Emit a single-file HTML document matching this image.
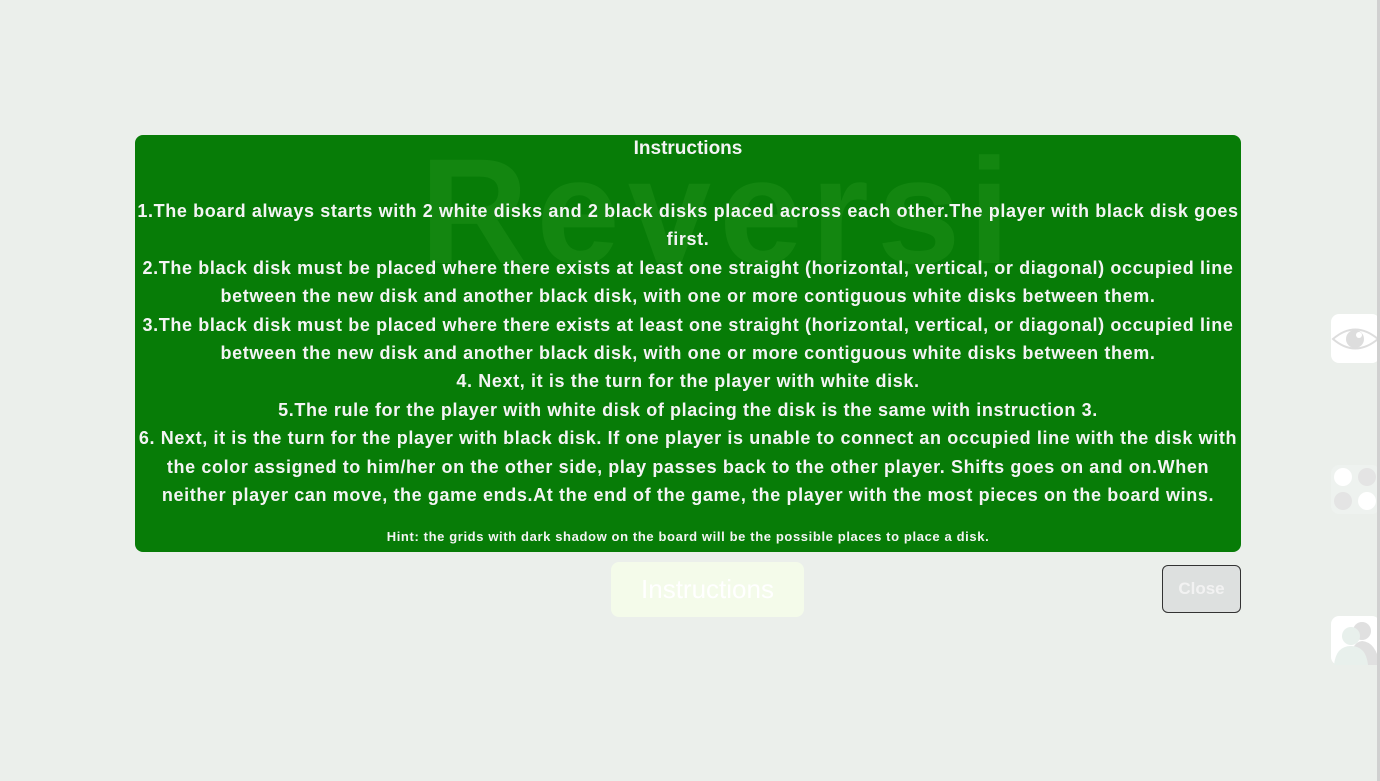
<!DOCTYPE html>
<html><head><style>
html,body{margin:0;padding:0;width:1380px;height:781px;overflow:hidden;background:#ebefeb;font-family:"Liberation Sans",sans-serif}
.sb{position:absolute;right:0;top:0;width:3px;height:781px;background:#d0d0d0}
.box{position:absolute;left:135px;top:135px;width:1106px;height:417px;background:#077c07;border-radius:8px;color:#f4f4f4;font-weight:bold;text-align:center;overflow:hidden}
.logo{position:absolute;left:285px;top:-10px;font-size:150px;color:#138610;letter-spacing:8px;font-weight:bold}
.t{position:absolute;left:0;width:100%;font-size:18px;white-space:nowrap;letter-spacing:0.62px}
.play{position:absolute;left:611px;top:485px;width:193px;height:52px;border-radius:8px;background:#078007;color:#1f8f1f;font-size:26px;text-align:center;line-height:52px}
.ins{position:absolute;left:611px;top:562px;width:193px;height:55px;border-radius:8px;background:#f4fbea;color:#fff;font-size:26px;text-align:center;line-height:55px}
.close{position:absolute;left:1162px;top:565px;width:77px;height:46px;border:1px solid #333;border-radius:6px;background:#dde0df;color:#f2f2f2;font-weight:bold;font-size:17px;text-align:center;line-height:46px}
.ic{position:absolute;left:1331px;width:49px;height:49px;border-radius:8px}
</style></head><body>
<div class="play">Play</div>
<div class="box">
<div class="logo">Reversi</div>
<div class="t" style="top:3px;font-size:19px;letter-spacing:0">Instructions</div>
<div class="t" style="top:66px">1.The board always starts with 2 white disks and 2 black disks placed across each other.The player with black disk goes</div>
<div class="t" style="top:94px">first.</div>
<div class="t" style="top:123px">2.The black disk must be placed where there exists at least one straight (horizontal, vertical, or diagonal) occupied line</div>
<div class="t" style="top:151px">between the new disk and another black disk, with one or more contiguous white disks between them.</div>
<div class="t" style="top:180px">3.The black disk must be placed where there exists at least one straight (horizontal, vertical, or diagonal) occupied line</div>
<div class="t" style="top:208px">between the new disk and another black disk, with one or more contiguous white disks between them.</div>
<div class="t" style="top:236px">4. Next, it is the turn for the player with white disk.</div>
<div class="t" style="top:265px">5.The rule for the player with white disk of placing the disk is the same with instruction 3.</div>
<div class="t" style="top:293px">6. Next, it is the turn for the player with black disk. If one player is unable to connect an occupied line with the disk with</div>
<div class="t" style="top:322px">the color assigned to him/her on the other side, play passes back to the other player. Shifts goes on and on.When</div>
<div class="t" style="top:350px">neither player can move, the game ends.At the end of the game, the player with the most pieces on the board wins.</div>
<div class="t" style="top:394px;font-size:13px;letter-spacing:0.62px">Hint: the grids with dark shadow on the board will be the possible places to place a disk.</div>
</div>
<div class="ins">Instructions</div>
<div class="close">Close</div>
<div class="ic" style="top:314px;background:#fff">
<svg width="49" height="49"><path d="M2 25 Q24 6 47 25 Q24 44 2 25Z" fill="none" stroke="#ddd" stroke-width="2"/><circle cx="24" cy="25" r="9" fill="#ddd"/><circle cx="28" cy="21" r="3" fill="#fff"/></svg></div>
<div class="ic" style="top:465px;background:#eef2ef">
<svg width="49" height="49"><circle cx="12" cy="12" r="9" fill="#fff"/><circle cx="36" cy="12" r="9" fill="#e4e4e4"/><circle cx="12" cy="36" r="9" fill="#e4e4e4"/><circle cx="36" cy="36" r="9" fill="#fff"/></svg></div>
<div class="ic" style="top:616px;background:#fff">
<svg width="49" height="49"><circle cx="31" cy="15" r="9" fill="#e0e0e0"/><path d="M18 49 Q20 26 31 25 Q45 26 49 49Z" fill="#e0e0e0"/><circle cx="20" cy="20" r="9" fill="#e8f0ec"/><path d="M3 49 Q5 30 20 30 Q35 30 37 49Z" fill="#e8f0ec"/></svg></div>
<div class="sb"></div>
</body></html>
